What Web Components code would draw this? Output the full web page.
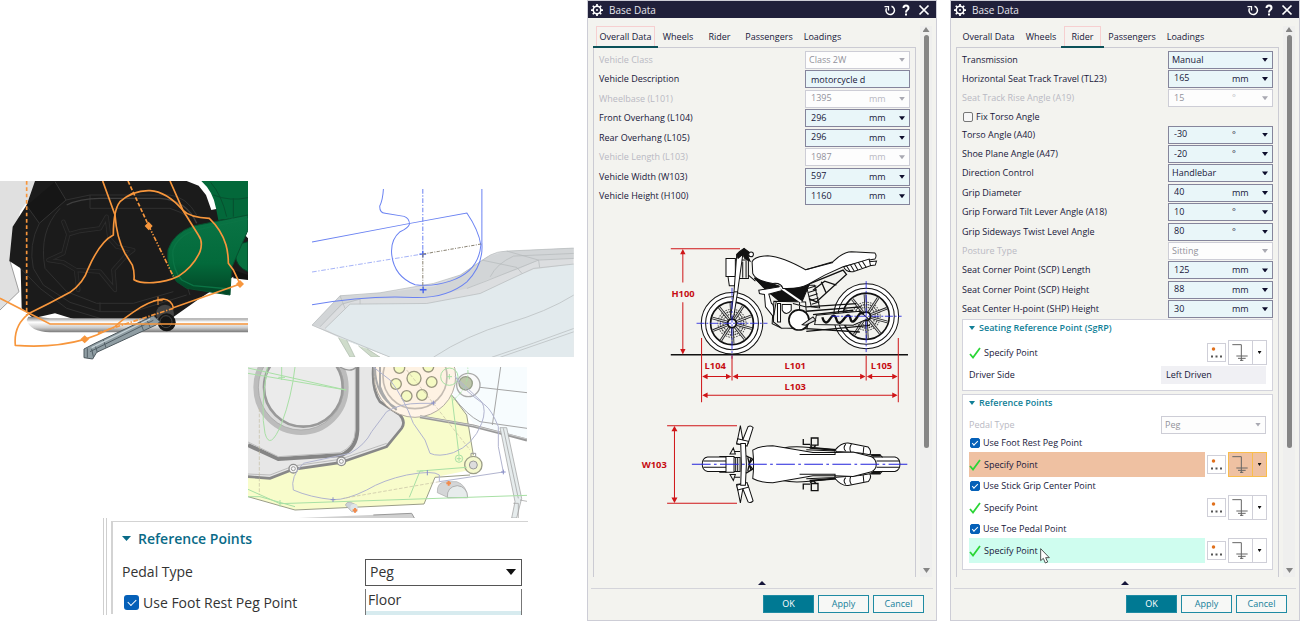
<!DOCTYPE html>
<html lang="en">
<head>
<meta charset="utf-8">
<title>Base Data</title>
<style>
  html, body { margin: 0; background: #fff; }
  body { font: 9px/12px "Open Sans", "Noto Sans", sans-serif; color: #17173a; --line: #cdcdd6; --teal: #007993; }
</style>
</head>
<body>
<app-page></app-page>

<template id="t-page">
  <style>
    :host { display: grid; grid-template-columns: 574fr 350fr 350fr; column-gap: 13px; min-height: 100vh; }
  </style>
  <picture-board></picture-board>
  <base-dialog heading="Base Data" tab="Overall Data">
    <field-stack style="--stack:156px">
      <choice-field label="Vehicle Class" value="Class 2W" disabled></choice-field>
      <text-field label="Vehicle Description" value="motorcycle d"></text-field>
      <number-field label="Wheelbase (L101)" value="1395" unit="mm" disabled></number-field>
      <number-field label="Front Overhang (L104)" value="296" unit="mm"></number-field>
      <number-field label="Rear Overhang (L105)" value="296" unit="mm"></number-field>
      <number-field label="Vehicle Length (L103)" value="1987" unit="mm" disabled></number-field>
      <number-field label="Vehicle Width (W103)" value="597" unit="mm"></number-field>
      <number-field label="Vehicle Height (H100)" value="1160" unit="mm"></number-field>
    </field-stack>
    <vehicle-diagram></vehicle-diagram>
  </base-dialog>
  <base-dialog heading="Base Data" tab="Rider">
    <field-stack style="--stack:58px">
      <choice-field label="Transmission" value="Manual"></choice-field>
      <number-field label="Horizontal Seat Track Travel (TL23)" value="165" unit="mm"></number-field>
      <number-field label="Seat Track Rise Angle (A19)" value="15" unit="°" disabled></number-field>
    </field-stack>
    <check-field label="Fix Torso Angle" style="--row:17px"></check-field>
    <field-stack style="--stack:194px">
      <number-field label="Torso Angle (A40)" value="-30" unit="°"></number-field>
      <number-field label="Shoe Plane Angle (A47)" value="-20" unit="°"></number-field>
      <choice-field label="Direction Control" value="Handlebar"></choice-field>
      <number-field label="Grip Diameter" value="40" unit="mm"></number-field>
      <number-field label="Grip Forward Tilt Lever Angle (A18)" value="10" unit="°"></number-field>
      <number-field label="Grip Sideways Twist Level Angle" value="80" unit="°"></number-field>
      <choice-field label="Posture Type" value="Sitting" disabled></choice-field>
      <number-field label="Seat Corner Point (SCP) Length" value="125" unit="mm"></number-field>
      <number-field label="Seat Corner Point (SCP) Height" value="88" unit="mm"></number-field>
      <number-field label="Seat Center H-point (SHP) Height" value="30" unit="mm"></number-field>
    </field-stack>
    <group-box heading="Seating Reference Point (SgRP)">
      <point-row></point-row>
      <read-field label="Driver Side" value="Left Driven"></read-field>
    </group-box>
    <group-box heading="Reference Points">
      <choice-field label="Pedal Type" value="Peg" disabled></choice-field>
      <check-field label="Use Foot Rest Peg Point" checked></check-field>
      <point-row tone="active"></point-row>
      <check-field label="Use Stick Grip Center Point" checked></check-field>
      <point-row></point-row>
      <check-field label="Use Toe Pedal Point" checked></check-field>
      <point-row tone="hover"><mouse-pointer></mouse-pointer></point-row>
    </group-box>
  </base-dialog>
</template>

<template id="t-board">
  <style>
    :host { display: block; padding-top: 181px; box-sizing: border-box; }
    .top { display: grid; grid-template-columns: 248fr 262fr; column-gap: 64px; align-items: start; }
    .top > :last-child { margin-top: 8px; }
    .mid { display: grid; grid-template-columns: 248fr 279fr 47fr; margin-top: 7px; }
    .mid > * { grid-column: 2; }
    .low { display: grid; grid-template-columns: 103fr 425fr 46fr; }
    .low > * { grid-column: 2; }
    svg { display: block; width: 100%; overflow: hidden; }
  </style>
  <div class="top">
    <svg viewBox="0 18 744 537" role="img" aria-label="Engine and foot rest with rider outline">
      <defs>
        <linearGradient id="tube" x1="0" y1="0" x2="0" y2="1"><stop offset="0" stop-color="#777"/><stop offset=".35" stop-color="#fff"/><stop offset=".7" stop-color="#ccc"/><stop offset="1" stop-color="#777"/></linearGradient>
        <linearGradient id="grn" x1="0" y1="0" x2="0" y2="1"><stop offset="0" stop-color="#0a7445"/><stop offset=".6" stop-color="#036a3b"/><stop offset="1" stop-color="#034425"/></linearGradient>
      </defs>
      <path d="M0 18H170L110 40 60 110 30 255 57 350 0 405Z" fill="#e0e0e0"/>
      <path d="M30 258 57 350 0 405" fill="none" stroke="#777" stroke-width="2"/>
      <path d="M105 18H560L596 32 618 60 634 105 660 100 744 190V310L700 305 600 370 500 440 380 470 345 470 305 440 240 438 165 415 100 430 65 400 62 280 28 258 38 155 80 90Z" fill="#1b1b1b"/>
      <path d="M165 20 198 75 118 145 80 92" fill="#161616" stroke="#333" stroke-width="3"/>
      <path d="M198 75 270 60H510Q560 66 590 120M118 145Q85 210 100 280L130 330 210 382 300 410H400L560 360M180 100Q115 170 135 280L200 350 290 385H400L520 350M270 60V100H510Q545 110 570 130M62 280 120 340 200 400 300 430 345 470M300 382V410M560 330 570 360" fill="none" stroke="#303030" stroke-width="3"/>
      <path d="M200 90Q240 70 300 70H480Q560 75 590 145" fill="none" stroke="#3f3f3f" stroke-width="4"/>
      <path d="M190 140 205 178 240 168 300 160 320 125 328 190 350 215 400 225 380 240 340 285 345 345 300 290 228 285 235 345 228 285 190 262 145 255 190 235 205 178" fill="none" stroke="#2d2d2d" stroke-width="13" stroke-linejoin="round" stroke-linecap="round"/>
      <path d="M190 140 205 178 240 168 300 160 320 125 328 190 350 215 400 225 380 240 340 285 345 345 300 290 228 285 235 345 228 285 190 262 145 255 190 235 205 178" fill="none" stroke="#1d1d1d" stroke-width="8" stroke-linejoin="round" stroke-linecap="round"/>
      <path d="M604 18H744V125L655 135 648 100Q640 50 604 18Z" fill="#03683a"/>
      <path d="M632 22Q665 60 680 125M640 60Q690 80 744 68M700 70V125" fill="none" stroke="#07502f" stroke-width="3"/>
      <path d="M744 200Q705 205 706 240T744 290Z" fill="#06713f" stroke="#053e25" stroke-width="3"/>
      <path d="M700 285 744 300V315L700 310Z" fill="#111"/>
      <path d="M744 120 580 153Q520 175 504 225 498 280 530 320L560 340 690 360 694 280 744 165Z" fill="url(#grn)" stroke="#07512f" stroke-width="3"/>
      <path d="M744 132 590 165Q535 180 519 225 515 280 545 315L580 332 690 342" fill="none" stroke="#0b7445" stroke-width="4"/>
      <path d="M85 425 110 425 150 430H744V472H150Q90 470 80 435Z" fill="url(#tube)"/>
      <circle cx="495" cy="416" r="27" fill="#444"/>
      <circle cx="500" cy="442" r="27" fill="#151515"/><circle cx="498" cy="440" r="18" fill="none" stroke="#444" stroke-width="3"/>
      <path d="M252 522 285 505 460 422 480 440 468 450 290 532 278 552 252 548Z" fill="#8f9da3" stroke="#4d585e" stroke-width="3"/>
      <path d="M270 530 460 436M285 510 292 532M310 495 318 518M420 440 430 465M440 432 450 456M262 520V548M275 522 280 545" fill="none" stroke="#536067" stroke-width="3"/>
      <path d="M275 518 450 432" stroke="#c4d0d5" stroke-width="4"/>
      <g fill="none" stroke="#f7963c" stroke-width="5">
        <path d="M80 18V420" stroke-dasharray="11 8"/>
        <path d="M308 18Q325 65 345 120 350 190 375 235L397 270Q404 290 402 314 420 325 460 323T535 304Q580 275 600 230 610 200 595 180L550 108 510 18"/>
        <path d="M340 180Q340 105 360 80 400 45 450 47 500 50 548 105 570 128 628 130 665 165 678 210 685 235 685 265L700 285 720 327 520 398Q515 375 490 372 460 375 425 395 370 430 345 455L290 480 254 493Q160 520 46 511 40 450 88 415 150 385 210 352 250 325 265 280 300 200 340 180Z"/>
        <path d="M0 370 150 447H744"/>
        <path d="M384 18 446 152" stroke-dasharray="12 6"/><path d="M446 152 520 304" stroke-dasharray="14 5 4 5 4 5"/>
        <path d="M520 400 290 475" stroke-dasharray="14 5 4 5"/><path d="M474 365V390M460 377H488" stroke-width="3"/>
      </g>
      <path d="M446 140 458 153 446 166 434 153ZM254 481 267 493 254 505 241 493ZM720 315 732 327 720 339 708 327Z" fill="#f7963c"/>
    </svg>
    <svg viewBox="36 27 785 504" role="img" aria-label="Foot outline over seat surface">
      <path d="M36 435 120 347 240 338 400 310 480 285 570 225Q590 214 620 213L820 204V531H270L130 478Z" fill="#dcdee0"/>
      <path d="M75 445 150 372 380 370 540 340 650 288 700 268 820 252V531H270L130 478Z" fill="#e2eaed"/>
      <path d="M36 435 120 347 180 345 400 320 480 285 560 230 620 213 820 204 820 235 715 240 660 265 560 300 500 325 380 352 180 357 130 372 60 440Z" fill="#d2d5d7"/>
      <path d="M36 435 120 347 240 338 400 310 480 285 570 225Q590 214 620 213L820 204M75 445 150 372 380 370 540 340 650 288 700 265 820 252M60 440 125 372 180 357M570 290Q590 250 640 228L820 220M500 325 560 302 660 262 715 240 820 235M545 240 650 262 665 280M620 213 715 240 718 262M120 347 135 385M180 357V372M36 435 270 531M400 531Q500 465 620 430 740 395 820 345M575 531Q700 490 820 445M600 531 820 455" fill="none" stroke="#b4b8ba" stroke-width="2"/>
      <path d="M115 472 150 531H165L140 480M175 497 215 531H240L200 505" fill="#cfdccb" stroke="#a9b7a7" stroke-width="2"/>
      <g fill="none" stroke="#6a82f2" stroke-width="3">
        <path d="M36 186 330 130 500 99Q535 150 542 195M545 27V190Q550 255 500 305 440 355 340 352 200 345 36 374"/>
        <path d="M250 27Q248 60 239 78 238 98 255 100L312 109Q328 115 328 132 325 143 300 155 270 180 275 225 283 290 345 314 400 320 450 303 535 275 542 195"/>
        <path d="M368 27V222" stroke-dasharray="14 5 4 5"/><path d="M36 276 368 222" stroke-dasharray="14 5 4 5" stroke-opacity=".6"/>
        <path d="M358 222H378M368 212V232M359 329H379M369 319V339" stroke="#4462ee" stroke-width="4"/>
      </g>
      <path d="M368 222 542 192M368 222V322" fill="none" stroke="#8b8474" stroke-width="3" stroke-dasharray="10 4 3 4"/>
    </svg>
  </div>
  <div class="mid">
    <svg viewBox="24 21 837 453" role="img" aria-label="Foot rest peg position on frame">
      <path d="M650 21H861V240L700 190 640 105Z" fill="#f7fcfe"/>
      <path d="M24 250 60 260 360 240 470 100 635 105 680 165 700 285 690 330 585 352 552 432 165 450 24 410Z" fill="#f8fccb"/>
      <path d="M24 410 165 450 552 432 585 352 690 345M635 105 680 165 700 285" fill="none" stroke="#9a9d88" stroke-width="3"/>
      <path d="M24 21H400Q395 90 420 125L480 165Q498 185 485 205L440 260 300 308 160 328 90 355 24 350Z" fill="#e7e7e7"/>
      <path d="M400 21Q395 90 420 125L480 165Q498 185 485 205L440 260 300 308 160 328 90 355 24 350" fill="none" stroke="#888" stroke-width="8"/>
      <path d="M402 21Q400 85 424 118L484 160M440 250 300 298 160 318 90 345 24 342" fill="none" stroke="#bbb" stroke-width="3"/>
      <path d="M352 21V210Q350 265 305 285L115 297 24 255" fill="none" stroke="#858585" stroke-width="12"/>
      <path d="M346 21V210Q345 260 300 278L115 290 24 246" fill="none" stroke="#bdbdbd" stroke-width="3"/>
      <circle cx="183" cy="82" r="135" fill="#dcdcdc" stroke="#bcbcbc" stroke-width="16"/>
      <circle cx="190" cy="82" r="118" fill="#ebebeb" stroke="#999" stroke-width="8"/>
      <circle cx="183" cy="82" r="128" fill="none" stroke="#a5a5a5" stroke-width="2"/>
      <path d="M300 21Q330 40 350 21" fill="#eee" stroke="#999" stroke-width="4"/>
      <circle cx="525" cy="50" r="122" fill="#fff4e7" stroke="#b3aca2" stroke-width="3"/>
      <circle cx="525" cy="50" r="96" fill="#fef2e3" stroke="#c4bbb2" stroke-width="5"/>
      <path d="M420 21V80Q435 125 470 150M405 21Q405 110 470 145" fill="none" stroke="#aaa" stroke-width="6"/>
      <g fill="#f5fac3" stroke="#99967f" stroke-width="4"><circle cx="522" cy="55" r="21"/><circle cx="468" cy="72" r="16"/><circle cx="575" cy="66" r="16"/><circle cx="500" cy="108" r="16"/><circle cx="546" cy="105" r="16"/><circle cx="478" cy="24" r="16"/><circle cx="565" cy="20" r="16"/></g>
      <circle cx="685" cy="75" r="35" fill="#fafafa" stroke="#aaa" stroke-width="4"/><circle cx="677" cy="70" r="20" fill="#bcc6a9" stroke="#959e88" stroke-width="4"/>
      <path d="M720 82 861 98M782 21 757 195M640 110Q680 165 720 185L861 205" fill="none" stroke="#a5a5a5" stroke-width="3"/>
      <path d="M540 170 700 198 861 240" fill="none" stroke="#999" stroke-width="9"/><path d="M540 169 700 197 861 237" fill="none" stroke="#ccc" stroke-width="3"/>
      <path d="M780 203H800L845 415 830 474H815L825 425Z" fill="#e6eced" stroke="#999" stroke-width="2"/><path d="M820 430H835V474M840 420 861 424M790 205 835 415" fill="none" stroke="#999" stroke-width="2"/>
      <circle cx="700" cy="315" r="26" fill="#f5f9cd" stroke="#9c9e88" stroke-width="4"/><circle cx="700" cy="315" r="12" fill="#ddd" stroke="#999" stroke-width="3"/><path d="M693 289V280H707V289" fill="none" stroke="#999" stroke-width="3"/>
      <g fill="#f6f6f6" stroke="#8f8f8f" stroke-width="4"><circle cx="160" cy="326" r="13"/><circle cx="304" cy="304" r="13"/></g>
      <g fill="none" stroke="#999" stroke-width="3"><circle cx="160" cy="326" r="6"/><circle cx="304" cy="304" r="6"/></g>
      <path d="M592 398Q590 365 620 365H650Q680 375 683 413H625Z" fill="#d4d6d7" stroke="#aaa" stroke-width="2"/><path d="M622 413Q620 380 652 377 682 380 683 413Z" fill="#e7ecec" stroke="#999" stroke-width="2"/>
      <path d="M316 435Q320 425 330 426L350 435V455L335 455Z" fill="#ccd3d7" stroke="#aaa" stroke-width="2"/><circle cx="342" cy="443" r="11" fill="#dfe5e7"/>
      <path d="M175 474 515 460 523 474Z" fill="#d0d0d0"/><path d="M400 465 515 460 523 474" fill="none" stroke="#999" stroke-width="3"/>
      <g fill="none" stroke="#a8e0a5" stroke-width="3">
        <path d="M24 24 318 90M24 40 318 90M165 21Q155 110 125 190 90 275 75 220 60 150 82 21M125 21V60M115 52H135M635 105 657 285M24 388 120 431 861 406M24 410H60L165 440M540 333 508 412M540 333 680 322M120 420V440"/>
        <circle cx="628" cy="50" r="26"/><circle cx="657" cy="296" r="11"/><path d="M650 296H664M657 289V303M620 50H636M628 42V58M530 333H550"/><path d="M640 120Q690 80 683 21" stroke-dasharray="12 4 3 4"/>
      </g>
      <g fill="none" stroke="#b1b4cf" stroke-width="3">
        <path d="M160 390Q150 350 190 310L330 280Q375 255 395 215L440 155Q480 130 540 130L580 130M645 50Q670 90 735 135 755 150 775 200V260L790 336 598 365V345Q580 330 500 345 430 360 380 390 320 420 279 419 210 412 160 390M400 21 450 60Q490 110 520 190L555 240 570 280Q595 292 640 278 700 255 725 190 740 150 725 125L645 50"/>
      </g>
      <path d="M58 145V405M500 30 580 130 690 270M598 365 310 415" fill="none" stroke="#c2bda2" stroke-width="2" stroke-dasharray="11 5"/>
      <path d="M580 122V136M573 129H587M790 329V343M783 336H797M279 412V426M272 419H286M562 330V346" stroke="#8a90c8" stroke-width="3"/>
      <path d="M626 363V377M619 370H633M345 444V458M338 451H352" stroke="#f28a4c" stroke-width="6"/>
    </svg>
  </div>
  <div class="low"><zoomed-panel></zoomed-panel></div>
</template>

<template id="t-zoomed">
  <style>
    :host { display: block; font-size: 14px; line-height: 18px; color: #333; }
    .outer { border-left: 4px double #cfcfcf; padding: 3px 0 0 4px; height: 97px; box-sizing: border-box; overflow: hidden; }
    .inner { border: solid #d3d3d3; border-width: 1px 0 0 2px; padding-left: 9px; height: 93px; box-sizing: border-box; display: grid; grid-template-rows: 33px 34px 21px; }
    h2 { margin: 0; font-size: 14px; font-weight: 600; color: #096a87; display: flex; align-items: center; gap: 7px; }
    h2::before { content: ""; width: 9px; height: 5px; background: currentColor; clip-path: polygon(0 0, 100% 0, 50% 100%); }
    .row { display: grid; grid-template-columns: 1fr 157px; padding-right: 6px; align-items: center; }
    .pick { display: flex; align-items: center; border: 1px solid #555; height: 27px; box-sizing: border-box; background: #fff; }
    .pick::after { content: ""; width: 10px; height: 6px; margin: 0 5px 0 -15px; flex: none; background: #111; clip-path: polygon(0 0, 100% 0, 50% 100%); pointer-events: none; }
    select { appearance: none; border: 0; background: none; font: inherit; color: inherit; flex: 1; width: 100%; padding: 0 4px; outline: 0; }
    ul { margin: 0; padding: 0; list-style: none; border: 1px solid #777; border-top: 0; align-self: start; height: 26px; }
    li { padding: 0 2px; height: 22px; line-height: 22px; box-sizing: border-box; }
    li + li { background: #d7ebef; height: 5px; }
    .check { display: flex; align-items: center; gap: 4px; padding-left: 2px; }
    input { appearance: none; margin: 0; width: 15px; height: 15px; border-radius: 3px; background: #0560b8; display: grid; place-items: center; }
    input::after { content: ""; width: 7px; height: 4px; border: solid #fff; border-width: 0 0 1px 1px; transform: rotate(-45deg); margin-top: -3px; }
  </style>
  <div class="outer"><div class="inner">
    <h2>Reference Points</h2>
    <div class="row"><label for="pt">Pedal Type</label><span class="pick"><select id="pt"><option>Peg</option></select></span></div>
    <div class="row"><label class="check"><input type="checkbox" checked>Use Foot Rest Peg Point</label><ul role="listbox" aria-label="Pedal Type"><li role="option">Floor</li><li role="option" aria-label="Peg"></li></ul></div>
  </div></div>
</template>

<template id="t-dialog">
  <style>
    :host { display: flex; flex-direction: column; box-sizing: border-box; min-height: 100vh; border: 1px solid var(--line); background: #f3f3ef; min-width: 0; }
    header { display: flex; align-items: center; gap: 6px; height: 17px; padding: 0 6px 0 3px; background: #20203a; color: #fff; flex: none; }
    h1 { margin: 0; font-size: 10px; font-weight: 400; flex: 1; color: #e6e6ec; }
    header svg { display: block; width: 12px; height: 12px; }
    header button { border: 0; background: none; padding: 0; color: #fff; display: block; }
    header nav { display: flex; gap: 4px; }
    .body { flex: 1; display: grid; grid-template-columns: minmax(0, 1fr) 12px; column-gap: 4px; padding: 8px 4px 0 5px; }
    .main { display: flex; flex-direction: column; min-width: 0; }
    .pane { flex: 1; border: solid #cbcbd3; border-width: 1px 1px 0; padding: 2px 5px 0; }
    footer { padding: 4px 3px 7px; display: flex; flex-direction: column; flex: none; }
    .fold { width: 8px; height: 4px; border: 0; padding: 0; background: #16163a; clip-path: polygon(50% 0, 100% 100%, 0 100%); align-self: center; }
    .acts { border-top: 1px solid #d4d4da; margin-top: 3px; padding: 6px 9px 0 0; display: flex; justify-content: flex-end; gap: 4px; }
    .acts button { font: inherit; width: 51px; height: 18px; padding: 0; border: 1px solid #1f8ba3; color: #14809a; background: #f7f8f6; }
    .acts .ok { background: var(--teal); color: #fff; }
  </style>
  <header>
    <svg viewBox="0 0 24 24" fill="none" stroke="#fff" aria-hidden="true"><circle cx="12" cy="12" r="7.500" stroke-width="3"/><path d="M12 0V5M12 19V24M0 12H5M19 12H24M3.500 3.500 7 7M17 17l3.500 3.500M20.500 3.500 17 7M7 17l-3.500 3.500" stroke-width="3.500"/><circle cx="12" cy="12" r="2" fill="#fff" stroke="none"/></svg>
    <h1></h1>
    <nav>
      <button aria-label="Reset"><svg viewBox="0 0 24 24" fill="none" stroke="#fff" stroke-width="3"><path d="M15 4.500A8.500 8.500 0 1 1 5 8.500"/><path d="M1 5H9V13" stroke-width="2.500"/></svg></button>
      <button aria-label="Help"><svg viewBox="0 0 24 24" fill="none" stroke="#fff" stroke-width="4"><path d="M7 8Q7 3 12 3T17 8Q17 10 14.500 12T12 17M12 19V23"/></svg></button>
      <button aria-label="Close" style="margin-left:2px"><svg viewBox="0 0 24 24" fill="none" stroke="#fff" stroke-width="3.500"><path d="M3 3 21 21M21 3 3 21"/></svg></button>
    </nav>
  </header>
  <div class="body">
    <div class="main"><tab-strip></tab-strip><div class="pane"><slot></slot></div></div>
    <scroll-rail></scroll-rail>
  </div>
  <footer>
    <button class="fold" aria-label="Collapse"></button>
    <div class="acts"><button class="ok">OK</button><button>Apply</button><button>Cancel</button></div>
  </footer>
</template>

<script>
  const shadow = (el, html) => {
    const root = el.attachShadow({ mode: 'open' });
    const src = document.getElementById(html);
    if (src) root.append(src.content.cloneNode(true)); else root.innerHTML = html;
    return root;
  };
  const define = (name, build) => customElements.define(name, class extends HTMLElement {
    connectedCallback() { if (!this.shadowRoot) build(this); }
  });

  const fieldCss = `
    :host { display: grid; grid-template-columns: minmax(0, 1fr) 105px; align-items: center; min-height: var(--row, 19px); }
    label { white-space: nowrap; }
    .box { display: flex; align-items: center; height: 18px; box-sizing: border-box; border: 1px solid #85859c; background: #e9f6f9; min-width: 0; }
    input, select { appearance: none; border: 0; margin: 0; background: none; font: inherit; color: inherit; outline: 0; height: 16px; min-width: 0; box-sizing: border-box; opacity: 1; }
    .arrow::after { content: ""; width: 6px; height: 4px; margin: 0 4px 0 -10px; background: #0d0d2c; clip-path: polygon(0 0, 100% 0, 50% 100%); pointer-events: none; flex: none; }
    :host([disabled]) label { color: #b9b9c3; }
    :host([disabled]) .box { color: #92929b; background: #fdfdfd; border-color: #cdcdd6; }
    :host([disabled]) .arrow::after { background: #a9a9b2; }`;
  const off = el => el.hasAttribute('disabled') ? 'disabled' : '';

  define('number-field', el => shadow(el, `<style>${fieldCss}
    input { flex: 1; width: 100%; padding: 0 0 2px 5px; }
    select { width: 40px; flex: none; padding: 0; }
    :host([disabled]) select { color: #b9b9c3; }</style>
    <label for="v">${el.getAttribute('label')}</label>
    <span class="box arrow"><input id="v" value="${el.getAttribute('value')}" ${off(el)}><select aria-label="Unit" ${off(el)}><option>${el.getAttribute('unit')}</option></select></span>`));

  define('choice-field', el => shadow(el, `<style>${fieldCss}
    select { flex: 1; width: 100%; padding: 0 3px; }</style>
    <label for="v">${el.getAttribute('label')}</label>
    <span class="box arrow"><select id="v" ${off(el)}><option>${el.getAttribute('value')}</option></select></span>`));

  define('text-field', el => shadow(el, `<style>${fieldCss}
    input { flex: 1; width: 100%; padding: 0 5px; }</style>
    <label for="v">${el.getAttribute('label')}</label>
    <span class="box"><input id="v" value="${el.getAttribute('value')}"></span>`));

  define('read-field', el => shadow(el, `<style>${fieldCss}
    output { height: 18px; line-height: 18px; background: #f0f0f4; padding-left: 5px; }</style>
    <label for="v">${el.getAttribute('label')}</label><output id="v">${el.getAttribute('value')}</output>`));

  define('check-field', el => shadow(el, `<style>
    :host { display: flex; align-items: center; height: var(--row, 18px); }
    label { display: flex; align-items: center; gap: 3px; }
    input { appearance: none; margin: 0 0 0 1px; width: 10px; height: 10px; box-sizing: border-box; border: 1px solid #777; border-radius: 2px; background: #f7f7f7; display: grid; place-items: center; }
    input:checked { background: #0560b8; border-color: #0560b8; }
    input:checked::after { content: ""; width: 5px; height: 2px; border: solid #fff; border-width: 0 0 1px 1px; transform: rotate(-45deg); margin-top: -2px; }</style>
    <label><input type="checkbox" ${el.hasAttribute('checked') ? 'checked' : ''}>${el.getAttribute('label')}</label>`));

  define('field-stack', el => shadow(el, `<style>:host { display: grid; grid-auto-rows: 1fr; min-height: var(--stack); }</style><slot></slot>`));

  define('group-box', el => shadow(el, `<style>
    :host { display: block; box-sizing: border-box; border: 1px solid #d3d3dc; background: #fff; padding: 0 6px 6px; margin-bottom: 3px; }
    h2 { margin: 0 0 4px; font-size: 9px; font-weight: 600; color: #117f97; display: flex; align-items: center; gap: 4px; height: 16px; }
    h2::before { content: ""; width: 6px; height: 4px; background: currentColor; clip-path: polygon(0 0, 100% 0, 50% 100%); }</style>
    <h2>${el.getAttribute('heading')}</h2><slot></slot>`));

  define('point-row', el => shadow(el, `<style>
    :host { display: grid; grid-template-columns: minmax(0, 1fr) 19px 38px; column-gap: 2px; align-items: center; height: 25px; }
    .name { display: flex; align-items: center; gap: 3px; height: 25px; position: relative; }
    :host([tone=active]) .name { background: #efc1a2; }
    :host([tone=hover]) .name { background: #cffdef; }
    svg { display: block; }
    button { border: 1px solid #cfcfd8; background: #fff; padding: 0; display: grid; place-items: center; box-sizing: border-box; }
    .dots { height: 19px; }
    .split { display: grid; grid-template-columns: 25px 14px; }
    .split button { height: 25px; }
    .split button + button { margin-left: -1px; }
    :host([tone=active]) .split button { background: #efc1a2; border-color: #f9bd4c; }
    .tri::before { content: ""; width: 4px; height: 3px; background: #111; clip-path: polygon(0 0, 100% 0, 50% 100%); }
    .over { position: absolute; left: 71px; top: 10px; }</style>
    <span class="name"><svg width="12" height="12" viewBox="0 0 24 24" fill="none" stroke="#2bd536" stroke-width="3.500" aria-hidden="true"><path d="M2 14 8 21 22 2"/></svg>Specify Point<span class="over"><slot></slot></span></span>
    <button class="dots" aria-label="Point Dialog"><svg width="13" height="13" viewBox="0 0 26 26" aria-hidden="true"><circle cx="7" cy="6" r="3.500" fill="#e0701c"/><path d="M2 19h4v4H2zM11 19h4v4h-4zM20 19h4v4h-4z" fill="#555"/></svg></button>
    <span class="split"><button aria-label="Inferred Point"><svg width="17" height="20" viewBox="0 0 51 60" fill="none" stroke="#666" stroke-width="3" aria-hidden="true"><path d="M1 5H28V54M13 39H47M18 46H41M24 52H34"/></svg></button><button class="tri" aria-label="Point options"></button></span>`));

  define('mouse-pointer', el => shadow(el, `<style>:host { display: block; } svg { display: block; }</style>
    <svg width="10" height="16" viewBox="0 0 30 48" aria-hidden="true"><path d="M2 2V38L10 31 16 45 23 42 17 29H28Z" fill="#fff" stroke="#333" stroke-width="2.500"/></svg>`));

  define('scroll-rail', el => shadow(el, `<style>
    :host { display: flex; flex-direction: column; align-items: center; background: #efefee; padding: 1px 0 4px; }
    i { width: 7px; height: 5px; background: #858585; clip-path: polygon(50% 0, 100% 100%, 0 100%); }
    i:last-child { transform: rotate(180deg); }
    .track { flex: 1; padding: 3px 0; }
    .thumb { width: 5px; height: 78%; border-radius: 3px; background: #858585; }</style>
    <i></i><div class="track"><div class="thumb"></div></div><i></i>`));

  define('tab-strip', el => {
    const current = el.getRootNode().host.getAttribute('tab');
    shadow(el, `<style>
      :host { display: grid; grid-template-columns: 65px 40px 43px 56px 51px; height: 22px; margin-bottom: -1px; position: relative; }
      button { font: inherit; color: inherit; border: 0; background: none; padding: 0; white-space: nowrap; margin-bottom: 1px; }
      [aria-selected=true] { border-bottom: 2px solid #0c5159; margin-bottom: 0; padding: 0 3px; }
      [aria-selected=true] span { display: block; border: 1px solid #f6cfd0; border-bottom: 0; line-height: 19px; background: #f5f3f0; }</style>
      ${['Overall Data', 'Wheels', 'Rider', 'Passengers', 'Loadings'].map(t => `<button role="tab" aria-selected="${t === current}"><span>${t}</span></button>`).join('')}`);
    el.setAttribute('role', 'tablist');
  });

  define('vehicle-diagram', el => {
    const spokes = (cx, cy, a, b) => Array.from({ length: 10 }, (_, i) => {
      const t = (i * 36 + 15) * Math.PI / 180, c = Math.cos(t), s = Math.sin(t);
      return `<path d="M${cx + c * a} ${cy + s * a}L${cx + c * b} ${cy + s * b}" stroke="#222" stroke-width="8"/><path d="M${cx + c * a} ${cy + s * a}L${cx + c * b} ${cy + s * b}" stroke="#ddd" stroke-width="3"/>`;
    }).join('');
    const wheel = (x, y, r) => `<circle cx="${x}" cy="${y}" r="${r}" fill="#fff"/><circle cx="${x}" cy="${y}" r="${r - 13}"/><circle cx="${x}" cy="${y}" r="${r - 28}" fill="#f3f3ef" stroke-width="5"/>
      <circle cx="${x}" cy="${y}" r="42" stroke="#555" stroke-dasharray="5 3"/><circle cx="${x}" cy="${y}" r="35" stroke="#444" stroke-width="4" stroke-dasharray="5 2"/><circle cx="${x}" cy="${y}" r="27" stroke="#555" stroke-width="4" stroke-dasharray="4 2"/>${spokes(x, y, 15, r - 31)}<circle cx="${x}" cy="${y}" r="13" fill="#fff" stroke-width="6"/>`;
    const half = `<path d="M292 100 303 45 310 85 306 102ZM310 88 326 48Q334 43 341 51L326 98Z" fill="#fff"/><path d="M295 84 327 92 323 106 292 98Z" fill="#fff"/><path d="M272 130 282 112 288 130ZM287 122H302M240 137H262" />
      <path d="M430 112Q460 105 510 110L590 118 640 128M480 131H586V122M500 117 586 121" /><path d="M510 111 590 118" stroke-width="6"/><path d="M515 82H535V103H515ZM491 85V101H512M512 104Q520 118 528 104" stroke-width="4"/>
      <path d="M586 118Q605 95 625 97L685 109Q696 120 690 132L660 127 590 122Z" fill="#fff"/><path d="M618 100Q608 112 618 121M635 100Q627 112 633 124M672 108 670 128M690 132H720L728 140"/><path d="M694 134H722" stroke-width="7"/>`;
    shadow(el, `<style>:host { display: block; padding: 39px 0 0 40px; } svg { display: block; width: 100%; } text { font: bold 28px "Open Sans", "Noto Sans", sans-serif; fill: #c60c12; }</style>
    <svg viewBox="0 30 810 790" role="img" aria-label="Motorcycle dimensions, side and top view">
      <g fill="none" stroke="#111" stroke-width="3">
        ${wheel(278, 264, 92)}${wheel(679, 243, 97)}
        <path d="M500 215 650 205M500 228 665 215M500 280 660 290M500 288 690 270M520 238 640 225" stroke-width="4"/>
        <path d="M530 240 660 228 685 250 640 270 525 268Z" fill="#f3f3ef"/>
        <path d="M548 246Q556 274 570 252T590 252 612 252 632 250 652 246 668 238" stroke-width="7"/>
        <path d="M345 130 380 160 425 195 400 230 398 265 425 278 455 275M350 135 500 160M500 150 515 215 540 218 525 150Z"/>
        <path d="M345 128 425 155 510 145 485 205 420 198 380 165Z" fill="#111"/>
        <path d="M500 150 610 105 620 118 530 200 508 190M520 165 555 138 590 150M545 140 560 175" stroke-width="4"/>
        <path d="M504 160 530 152M506 172 532 164M508 184 534 176M512 196 537 188M516 207 540 200"/>
        <path d="M403 198 498 200 503 280 425 278 402 260Z" fill="#f3f3ef"/><path d="M428 208H455V225Q440 245 428 225ZM410 200 403 240M460 205 500 215M480 200V235" fill="#fff"/>
        <path d="M358 165 420 155 428 166 388 177 396 205Q405 205 402 245L378 215 375 178 360 175Z" fill="#fff"/>
        <path d="M420 155 485 200" stroke="#fff" stroke-width="6"/>
        <circle cx="478" cy="254" r="30" fill="#fff" stroke-width="5"/><path d="M488 268 520 245 528 255 498 270Z" fill="#ddd"/>
        <path d="M414 205H423V260H414Z" fill="#fff"/>
        <path d="M338 80Q345 64 385 62 430 65 498 104L580 80Q610 50 635 50L705 54Q712 62 705 72L688 75 610 95 555 120 505 148Q480 162 430 160 425 142 400 145 350 138 340 115Z" fill="#fff"/>
        <path d="M612 95 688 72 692 92 640 110Q618 112 612 95ZM620 92 632 111M632 89 644 109M644 86 655 106M656 82 668 102M668 79 680 98M688 80 710 78 706 90 690 92M498 104 580 82" fill="#fff"/>
        <path d="M260 70H288V124H260ZM266 124H296V152H270Z" fill="#fff"/><path d="M288 75H327V130H296M310 80V128M320 78V128M327 120 348 138"/>
        <path d="M292 60H310L294 175 283 245H274L284 170Z" fill="#fff"/><path d="M284 170H296"/>
        <path d="M292 58 300 50 314 40 330 52 338 56V65L325 62 332 78 316 70 310 58 296 70Z" fill="#111"/><circle cx="335" cy="58" r="7" fill="#fff"/>
        <path d="M95 358H804" stroke-width="5"/>
      </g>
      <g stroke="#2323dc" stroke-width="2.500" fill="none" stroke-dasharray="24 5 6 5"><path d="M172 264H384M278 158V370M575 243H785M679 138V350"/></g>
      <g stroke="#cf1518" stroke-width="3" fill="none"><path d="M95 41H302M131 50V142M131 201V350M187 308V500M278 360V435M679 360V435M775 308V500M195 423H270M286 423H672M686 423H768M195 479H768"/></g>
      <path d="M131 42 139 58H123ZM131 357 139 341H123ZM189 423 205 415V431ZM276 423 260 415V431ZM280 423 296 415V431ZM677 423 661 415V431ZM681 423 697 415V431ZM773 423 757 415V431ZM189 479 205 471V487ZM773 479 757 471V487Z" fill="#cf1518"/>
      <text x="97" y="184">H100</text><text x="196" y="400">L104</text><text x="435" y="400">L101</text><text x="693" y="400">L105</text><text x="435" y="464">L103</text><text x="8" y="696">W103</text>
      <g transform="translate(0 525)">
        <g fill="none" stroke="#111" stroke-width="3">
          <path d="M262 139H205Q189 142 189 160T205 182H262ZM700 139H765Q780 143 780 160T765 182H700Z" fill="#fff"/><path d="M192 151H262M192 169H262M710 151H778M710 169H778"/>
          ${half}<g transform="matrix(1 0 0 -1 0 321)">${half}</g>
          <path d="M260 137H284V184H260ZM284 140H302V182H284Z" fill="#fff"/><path d="M289 140V182M295 140V182"/>
          <path d="M304 98H318L321 160 318 223H304L306 160Z" fill="#fff"/><path d="M320 135 340 145 328 160 340 175 320 187M325 140 335 180M335 140 325 180" stroke-width="4"/>
          <path d="M340 118Q360 105 400 105L520 125H586L640 124 695 138Q708 145 709 160T695 183L640 197 586 195H520L400 216Q360 215 340 203 345 160 340 118Z" fill="#fff"/>
          <path d="M480 131H586V123M480 190H586V198"/>
        </g>
        <path d="M158 160H804" stroke="#2323dc" stroke-width="3" stroke-dasharray="56 10 8 10"/>
        <path d="M84 45H293M84 277H293M106 52V270" stroke="#cf1518" stroke-width="3"/><path d="M106 46 115 62H97ZM106 276 115 260H97Z" fill="#cf1518"/>
      </g>
    </svg>`);
  });

  define('zoomed-panel', el => shadow(el, 't-zoomed'));
  define('picture-board', el => shadow(el, 't-board'));
  define('base-dialog', el => { shadow(el, 't-dialog').querySelector('h1').textContent = el.getAttribute('heading'); });
  define('app-page', el => shadow(el, 't-page'));
</script>
</body>
</html>
